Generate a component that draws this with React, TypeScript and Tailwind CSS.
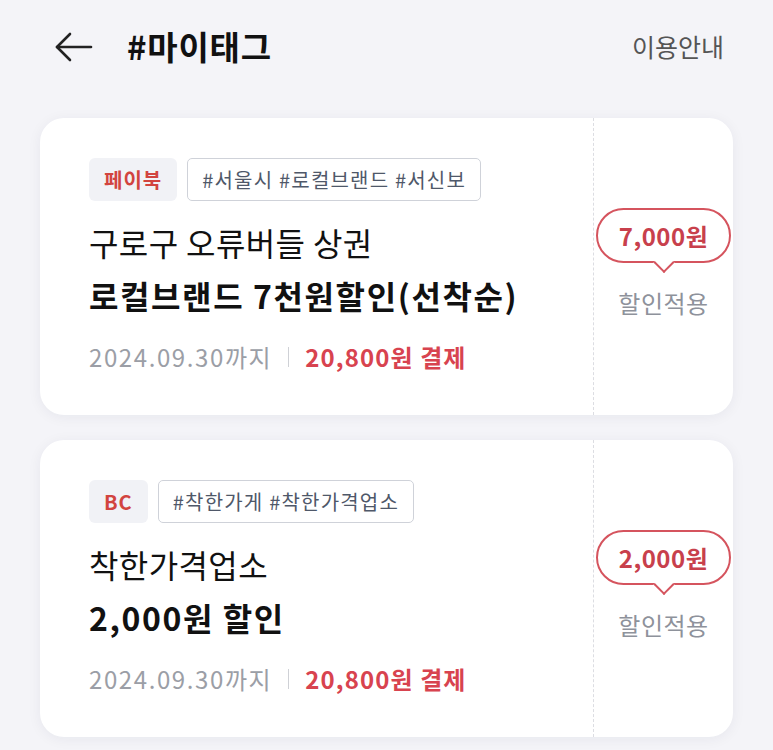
import { useState } from "react";

type Coupon = {
  id: number;
  card: string;
  tags: string;
  store: string;
  benefit: string;
  until: string;
  payment: string;
  discount: string;
};

const coupons: Coupon[] = [
  {
    id: 1,
    card: "페이북",
    tags: "#서울시 #로컬브랜드 #서신보",
    store: "구로구 오류버들 상권",
    benefit: "로컬브랜드 7천원할인(선착순)",
    until: "2024.09.30까지",
    payment: "20,800원 결제",
    discount: "7,000원",
  },
  {
    id: 2,
    card: "BC",
    tags: "#착한가게 #착한가격업소",
    store: "착한가격업소",
    benefit: "2,000원 할인",
    until: "2024.09.30까지",
    payment: "20,800원 결제",
    discount: "2,000원",
  },
];

function CouponCard({ coupon }: { coupon: Coupon }) {
  return (
    <div className="flex h-[297px] overflow-hidden rounded-[24px] bg-white shadow-[0_2px_14px_rgba(20,30,60,0.06)]">
      <div className="flex-1 pl-[49px] pt-[40px]">
        <div className="flex h-[43px] gap-[10px]">
          <span className="flex items-center rounded-[6px] bg-[#f1f2f6] px-[15px] text-[20px] font-bold tracking-[1px] text-[#d2443f]">
            {coupon.card}
          </span>
          <span className="flex items-center rounded-[5px] border border-[#cfd2d9] px-[14px] text-[20px] tracking-[1.2px] text-[#4f5869]">
            {coupon.tags}
          </span>
        </div>
        <div className="mt-[15px] text-[32px] leading-[53px] tracking-[0.4px] text-[#111]">{coupon.store}</div>
        <div className="text-[32px] font-bold leading-[53px] tracking-[1.6px] text-[#111]">{coupon.benefit}</div>
        <div className="mt-[20px] flex items-center text-[24px] leading-[30px]">
          <span className="tracking-[1.6px] text-[#9b9ea6]">{coupon.until}</span>
          <span className="mx-[16px] h-[20px] w-px bg-[#cfd1d6]" />
          <span className="font-bold tracking-[1.1px] text-[#d8434f]">{coupon.payment}</span>
        </div>
      </div>
      <div className="flex w-[140px] flex-col items-center border-l border-dashed border-[#dcdde2] pt-[90px]">
        <div className="relative flex h-[55px] w-[135px] items-center justify-center rounded-full border-2 border-[#d5545e] bg-white">
          <span className="text-[24px] font-bold tracking-[0.5px] text-[#c8404c]">{coupon.discount}</span>
          <span className="absolute -bottom-[9px] left-1/2 h-[15px] w-[15px] -translate-x-1/2 rotate-45 border-b-2 border-r-2 border-[#d5545e] bg-white" />
        </div>
        <div className="mt-[25px] text-[24px] leading-[30px] tracking-[0.5px] text-[#8e929b]">할인적용</div>
      </div>
    </div>
  );
}

export default function App() {
  const [items] = useState(coupons);

  return (
    <div className="min-h-screen w-full bg-[#f4f4f8] font-['Noto_Sans_CJK_KR',sans-serif]">
      <div className="flex h-[94px] items-center pl-[55px] pr-[49px]">
        <svg width="38" height="30" viewBox="0 0 38 30" fill="none" stroke="#222" strokeWidth="2.6" strokeLinecap="round" strokeLinejoin="round">
          <path d="M36 15H2" />
          <path d="M15 2L2 15l13 13" />
        </svg>
        <h1 className="ml-[34px] text-[33px] font-bold tracking-[0.8px] text-[#111]">#마이태그</h1>
        <span className="ml-auto text-[25px] text-[#555]">이용안내</span>
      </div>
      <div className="flex flex-col gap-[25px] pl-[40px] pr-[40px] pt-[24px]">
        {items.map((c) => (
          <CouponCard key={c.id} coupon={c} />
        ))}
      </div>
    </div>
  );
}
